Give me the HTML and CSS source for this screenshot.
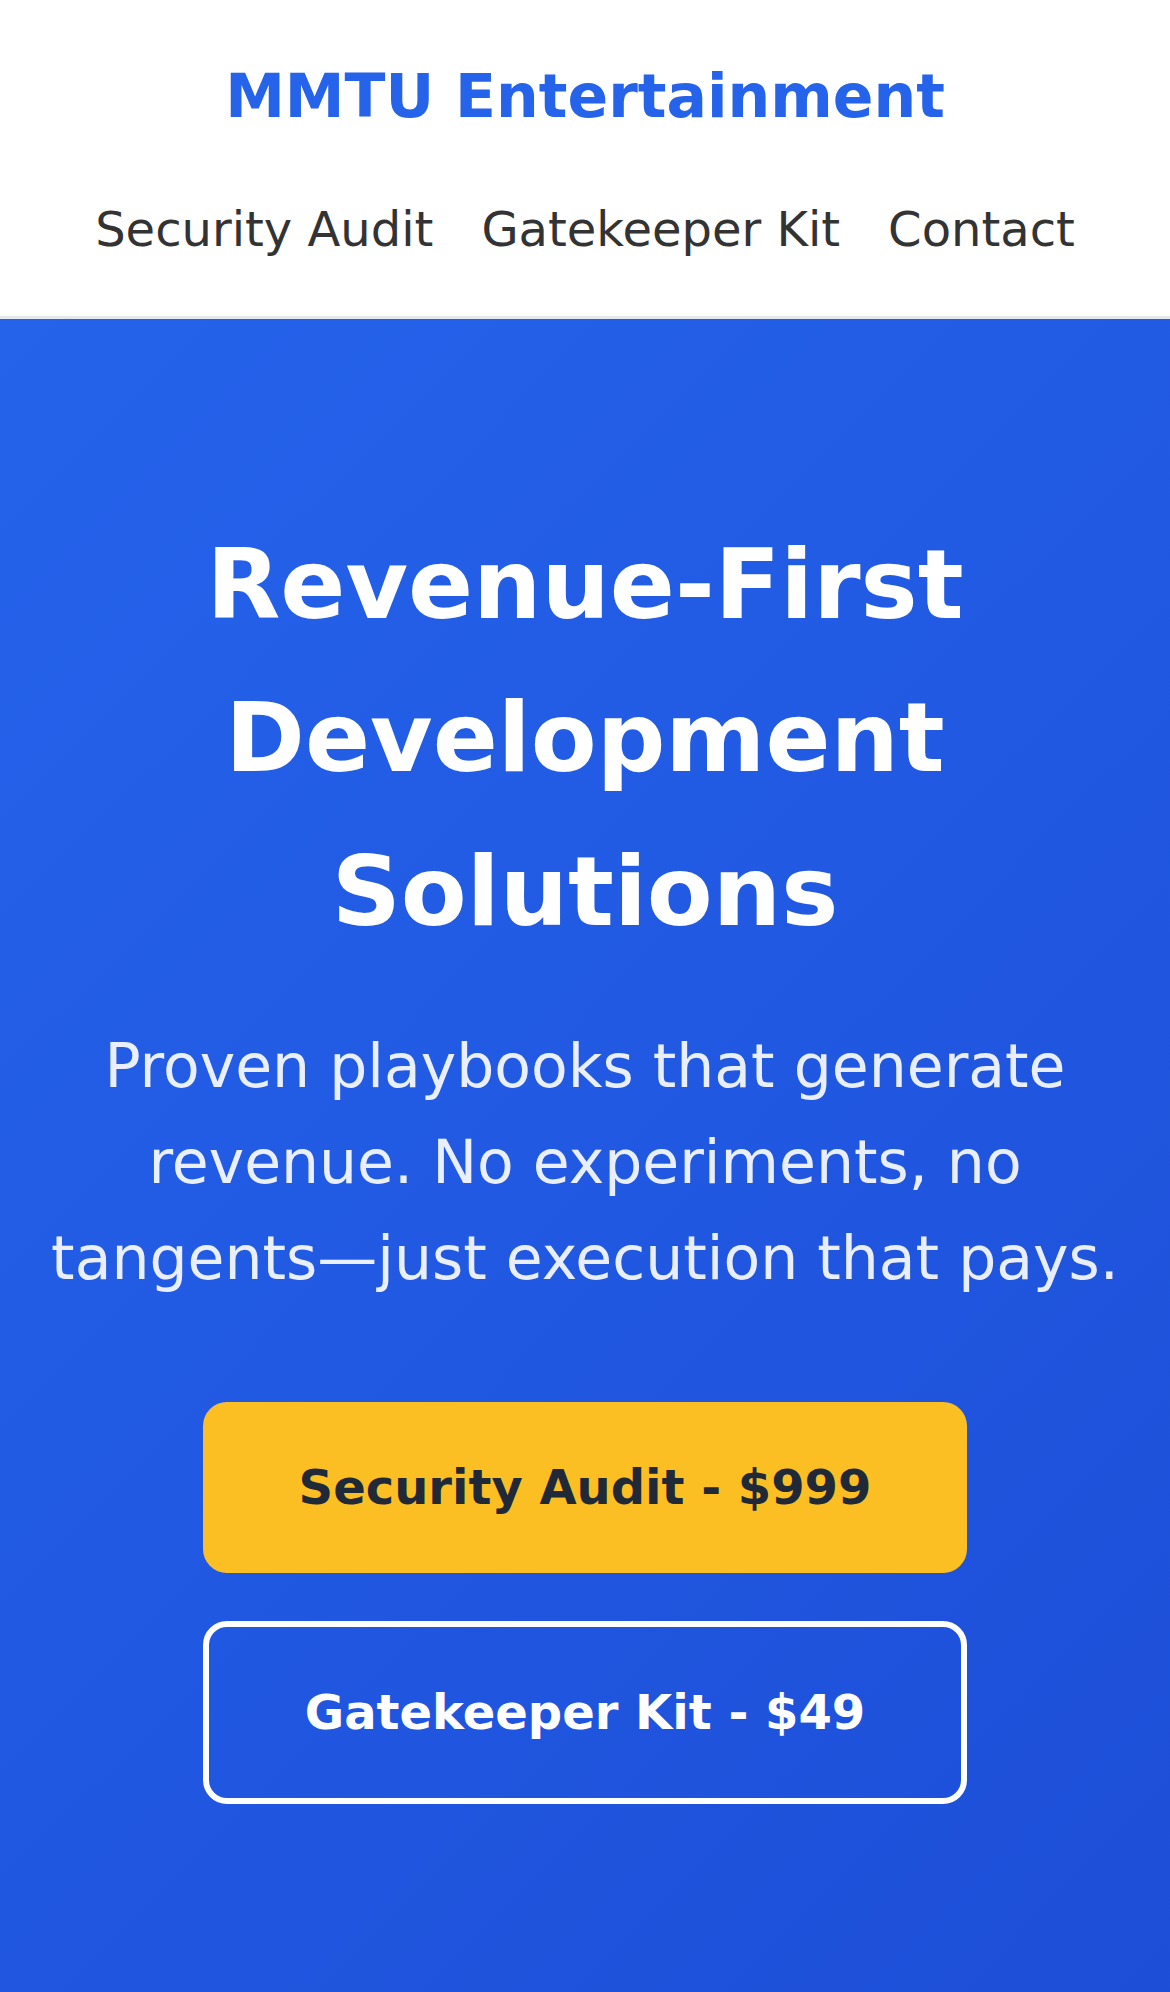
FILE: index.html
```html
<!DOCTYPE html>
<html lang="en">
<head>
<meta charset="utf-8">
<title>MMTU Entertainment</title>
<link rel="stylesheet" href="styles.css">
</head>
<body>
<header class="site-header">
  <div class="brand">MMTU Entertainment</div>
  <nav class="nav">
    <a href="#audit">Security Audit</a>
    <a href="#kit">Gatekeeper Kit</a>
    <a href="#contact">Contact</a>
  </nav>
</header>
<section class="hero">
  <h1 class="hero-title">Revenue-First Development Solutions</h1>
  <p class="hero-sub">Proven playbooks that generate revenue. No experiments, no tangents—just execution that pays.</p>
  <div class="cta">
    <a class="btn btn-primary" href="#audit">Security Audit - $999</a>
    <a class="btn btn-outline" href="#kit">Gatekeeper Kit - $49</a>
  </div>
</section>
</body>
</html>
```

FILE: styles.css
```css
* { box-sizing: border-box; }
html, body { margin: 0; padding: 0; }
body {
  font-family: "DejaVu Sans", sans-serif;
  line-height: 1.6;
  color: #333;
  background: #fff;
}
.site-header {
  background: #fff;
  padding: 48px;
  border-bottom: 3px solid #e5e7eb;
  display: flex;
  flex-direction: column;
  align-items: center;
  gap: 47px;
}
.brand {
  font-size: 60px;
  font-weight: bold;
  color: #2563eb;
}
.nav {
  display: flex;
  gap: 48px;
  justify-content: center;
}
.nav a {
  font-size: 48px;
  color: #333;
  text-decoration: none;
}
.hero {
  background: linear-gradient(135deg, #2563eb 0%, #1d4ed8 100%);
  color: #fff;
  text-align: center;
  padding: 190px 48px 192px;
}
.hero-title {
  font-size: 96px;
  font-weight: bold;
  line-height: 1.6;
  margin: 0 auto 48px;
  max-width: 900px;
}
.hero-sub {
  font-size: 60px;
  line-height: 1.6;
  margin: 0 0 96px;
  color: rgba(255, 255, 255, 0.9);
}
.cta {
  display: flex;
  flex-direction: column;
  align-items: center;
  gap: 48px;
}
.btn {
  display: block;
  width: 764px;
  padding: 57.6px 0;
  font-size: 48px;
  font-weight: bold;
  line-height: normal;
  text-decoration: none;
  border-radius: 24px;
  text-align: center;
}
.btn-primary {
  background: #fbbf24;
  color: #1f2937;
}
.btn-outline {
  background: transparent;
  color: #fff;
  border: 6px solid #fff;
}
```
